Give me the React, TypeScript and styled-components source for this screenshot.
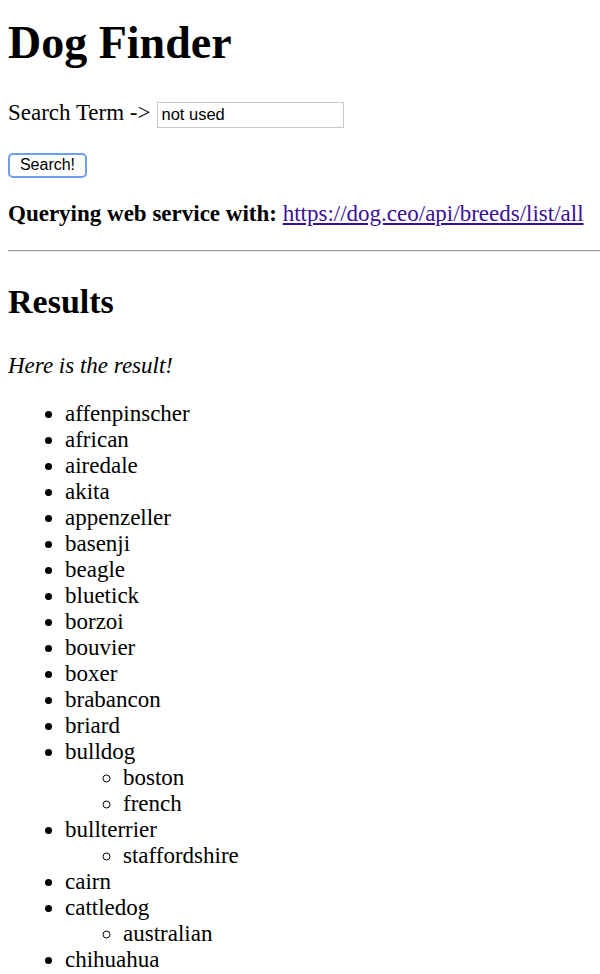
import styled, { createGlobalStyle } from 'styled-components';

const GlobalStyle = createGlobalStyle`
  html, body {
    margin: 0;
    padding: 0;
    background: #fff;
  }
  body {
    font-family: "Liberation Serif", "Times New Roman", serif;
    font-size: 23px;
    color: #000;
  }
`;

const Page = styled.div`
  padding: 0 0 0 8px;
  overflow: hidden;
`;

const Title = styled.h1`
  margin: 16px 0 0;
  font-size: 46px;
  line-height: 53px;
  font-weight: bold;
`;

const SearchRow = styled.div`
  display: flex;
  align-items: baseline;
  gap: 6px;
  margin-top: 31px;
  line-height: 26px;
`;

const TermInput = styled.input`
  box-sizing: border-box;
  width: 187px;
  height: 26px;
  padding: 0 4px;
  border: 1px solid #c9c9c9;
  font-family: "Liberation Sans", Arial, sans-serif;
  font-size: 16.5px;
  color: #000;
  outline: none;
`;

const SearchButton = styled.button`
  display: block;
  box-sizing: border-box;
  width: 79px;
  height: 25px;
  margin-top: 25px;
  padding: 0;
  border: 2px solid #6f9ff0;
  border-radius: 5px;
  background: #fff;
  font-family: "Liberation Sans", Arial, sans-serif;
  font-size: 16px;
  color: #000;
`;

const QueryLine = styled.p`
  margin: 23px 0 0;
  line-height: 26px;
`;

const Link = styled.a`
  color: #3a1096;
  text-decoration: underline;
`;

const Rule = styled.hr`
  margin: 23px 0 0;
  height: 0;
  border: none;
  border-top: 1px solid #9b9b9b;
  border-bottom: 1px solid #ececec;
`;

const SectionTitle = styled.h2`
  margin: 30px 0 0;
  font-size: 34px;
  line-height: 39px;
  font-weight: bold;
`;

const Note = styled.p`
  margin: 32px 0 0;
  font-style: italic;
  line-height: 26px;
`;

const BreedList = styled.ul<{ $nested?: boolean }>`
  margin: ${(p) => (p.$nested ? '0' : '22px 0 0')};
  padding-left: ${(p) => (p.$nested ? '58px' : '57px')};
  list-style: ${(p) => (p.$nested ? 'circle' : 'disc')};
  line-height: 26px;
`;

const breeds: [string, string[]][] = [
  ['affenpinscher', []],
  ['african', []],
  ['airedale', []],
  ['akita', []],
  ['appenzeller', []],
  ['basenji', []],
  ['beagle', []],
  ['bluetick', []],
  ['borzoi', []],
  ['bouvier', []],
  ['boxer', []],
  ['brabancon', []],
  ['briard', []],
  ['bulldog', ['boston', 'french']],
  ['bullterrier', ['staffordshire']],
  ['cairn', []],
  ['cattledog', ['australian']],
  ['chihuahua', []],
];

const url = 'https://dog.ceo/api/breeds/list/all';

export default function App() {
  return (
    <>
      <GlobalStyle />
      <Page>
        <Title>Dog Finder</Title>
        <SearchRow>
          <span>Search Term -&gt;</span>
          <TermInput defaultValue="not used" />
        </SearchRow>
        <SearchButton>Search!</SearchButton>
        <QueryLine>
          <b>Querying web service with:</b> <Link href={url}>{url}</Link>
        </QueryLine>
        <Rule />
        <SectionTitle>Results</SectionTitle>
        <Note>Here is the result!</Note>
        <BreedList>
          {breeds.map(([name, subs]) => (
            <li key={name}>
              {name}
              {subs.length > 0 && (
                <BreedList $nested>
                  {subs.map((s) => (
                    <li key={s}>{s}</li>
                  ))}
                </BreedList>
              )}
            </li>
          ))}
        </BreedList>
      </Page>
    </>
  );
}
